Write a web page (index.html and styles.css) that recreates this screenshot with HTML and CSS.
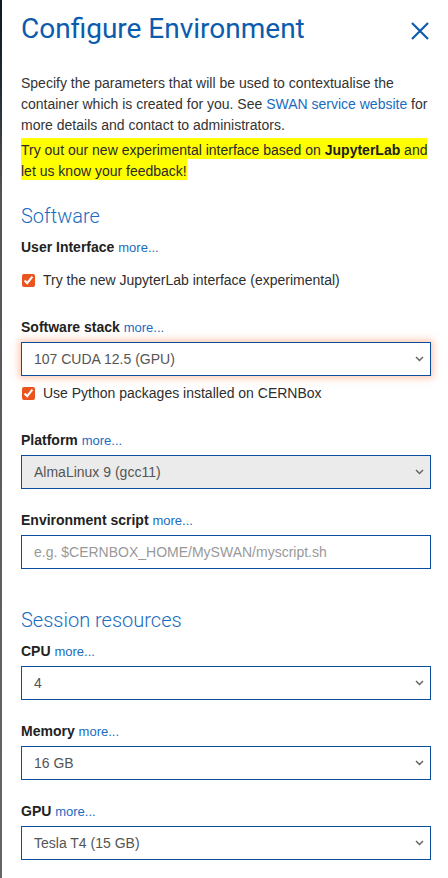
FILE: index.html
```html
<!DOCTYPE html>
<html lang="en">
<head>
<meta charset="utf-8">
<title>Configure Environment</title>
<link rel="stylesheet" href="styles.css">
</head>
<body>
<div class="panel">
  <header class="header">
    <h1 class="title">Configure Environment</h1>
    <button class="close" aria-label="Close">
      <svg width="20" height="20" viewBox="0 0 20 20"><path d="M2 2 L18 18 M18 2 L2 18" stroke="#0b5cad" stroke-width="2.2" fill="none"/></svg>
    </button>
  </header>

  <p class="intro">Specify the parameters that will be used to contextualise the container which is created for you. See <a href="#" class="link">SWAN service website</a> for more details and contact to administrators.</p>
  <p class="notice"><mark class="hl">Try out our new experimental interface based on <b>JupyterLab</b> and let us know your feedback!</mark></p>

  <h2 class="section first">Software</h2>

  <div class="field field-check">
    <div class="label"><b>User Interface</b> <a href="#" class="more">more...</a></div>
    <label class="check check-top"><input type="checkbox" checked><span>Try the new JupyterLab interface (experimental)</span></label>
  </div>

  <div class="field field-check">
    <div class="label"><b>Software stack</b> <a href="#" class="more">more...</a></div>
    <div class="select-wrap focus">
      <select class="control"><option>107 CUDA 12.5 (GPU)</option></select>
      <svg class="chev" width="9" height="6" viewBox="0 0 9 6"><path d="M1 1 L4.5 4.5 L8 1" stroke="#666" stroke-width="1.5" fill="none"/></svg>
    </div>
    <label class="check"><input type="checkbox" checked><span>Use Python packages installed on CERNBox</span></label>
  </div>

  <div class="field">
    <div class="label"><b>Platform</b> <a href="#" class="more">more...</a></div>
    <div class="select-wrap">
      <select class="control disabled" disabled><option>AlmaLinux 9 (gcc11)</option></select>
      <svg class="chev" width="9" height="6" viewBox="0 0 9 6"><path d="M1 1 L4.5 4.5 L8 1" stroke="#666" stroke-width="1.5" fill="none"/></svg>
    </div>
  </div>

  <div class="field">
    <div class="label"><b>Environment script</b> <a href="#" class="more">more...</a></div>
    <input class="control" type="text" placeholder="e.g. $CERNBOX_HOME/MySWAN/myscript.sh">
  </div>

  <h2 class="section second">Session resources</h2>

  <div class="field">
    <div class="label"><b>CPU</b> <a href="#" class="more">more...</a></div>
    <div class="select-wrap">
      <select class="control"><option>4</option></select>
      <svg class="chev" width="9" height="6" viewBox="0 0 9 6"><path d="M1 1 L4.5 4.5 L8 1" stroke="#666" stroke-width="1.5" fill="none"/></svg>
    </div>
  </div>

  <div class="field">
    <div class="label"><b>Memory</b> <a href="#" class="more">more...</a></div>
    <div class="select-wrap">
      <select class="control"><option>16 GB</option></select>
      <svg class="chev" width="9" height="6" viewBox="0 0 9 6"><path d="M1 1 L4.5 4.5 L8 1" stroke="#666" stroke-width="1.5" fill="none"/></svg>
    </div>
  </div>

  <div class="field">
    <div class="label"><b>GPU</b> <a href="#" class="more">more...</a></div>
    <div class="select-wrap">
      <select class="control"><option>Tesla T4 (15 GB)</option></select>
      <svg class="chev" width="9" height="6" viewBox="0 0 9 6"><path d="M1 1 L4.5 4.5 L8 1" stroke="#666" stroke-width="1.5" fill="none"/></svg>
    </div>
  </div>
</div>
</body>
</html>
```

FILE: styles.css
```css
html, body {
  margin: 0;
  padding: 0;
  background: #fff;
}

body {
  font-family: "Liberation Sans", Arial, sans-serif;
  font-size: 14px;
  color: #333;
  overflow: hidden;
}

.panel {
  min-height: 878px;
  box-sizing: border-box;
  padding: 0 17px 0 19px;
  border-left: 2px solid #555;
  border-image: linear-gradient(to bottom, #0c1a26 0, #1d2a33 80px, #555 200px, #666 100%) 1;
}

.header {
  display: flex;
  align-items: center;
  justify-content: space-between;
  padding-top: 12px;
}

.title {
  margin: 0;
  font-family: Roboto, "Liberation Sans", sans-serif;
  font-weight: 400;
  font-size: 28px;
  line-height: 34px;
  color: #0b5cad;
}

.close {
  border: 0;
  background: none;
  padding: 0;
  margin: 4px 1px 0 0;
  width: 20px;
  height: 20px;
  display: flex;
}

.intro {
  margin: 27px 0 0;
  line-height: 21px;
}

.link, .more {
  color: #1a6cbf;
  text-decoration: none;
}

.notice {
  margin: 4px 0 0;
  line-height: 21px;
}

.hl {
  background: #ffff00;
  color: #2a2a2a;
  padding: 4px 0 1px;
}

.hl b {
  color: #1e1e1e;
}

.section {
  margin: 0;
  font-family: Roboto, "Liberation Sans", sans-serif;
  font-weight: 300;
  font-size: 20px;
  line-height: 22px;
  color: #1a6cbf;
}

.section.first {
  margin-top: 23px;
  margin-bottom: 10px;
}

.section.second {
  margin-top: 40px;
  margin-bottom: 10px;
}

.field {
  margin-bottom: 21px;
}

.field-check {
  margin-bottom: 27px;
}

.label {
  height: 20px;
  line-height: 20px;
  margin-bottom: 5px;
  overflow: hidden;
}

.label b {
  color: #222;
}

.more {
  font-size: 13px;
}

.check {
  display: flex;
  align-items: center;
  gap: 8px;
  height: 20px;
  line-height: 20px;
  margin-top: 7px;
  padding-left: 1px;
  color: #2e2e2e;
}

.check-top {
  margin-top: 13px;
}

.check input {
  margin: 0;
  width: 13px;
  height: 13px;
  accent-color: #e9541f;
}

.select-wrap {
  position: relative;
}

.control {
  display: block;
  width: 100%;
  height: 34px;
  box-sizing: border-box;
  margin: 0;
  padding: 0 12px;
  border: 1.5px solid #0b4f9c;
  border-radius: 0;
  background: #fff;
  font-family: "Liberation Sans", Arial, sans-serif;
  font-size: 14px;
  color: #555;
  appearance: none;
  -webkit-appearance: none;
  outline: none;
}

.control::placeholder {
  color: #999;
}

.control.disabled {
  background: #ebebeb;
  opacity: 1;
  color: #555;
}

.focus .control {
  box-shadow: 0 0 7px 2px rgba(255, 140, 90, 0.5);
}

.chev {
  position: absolute;
  right: 7px;
  top: 14px;
  pointer-events: none;
}
```
